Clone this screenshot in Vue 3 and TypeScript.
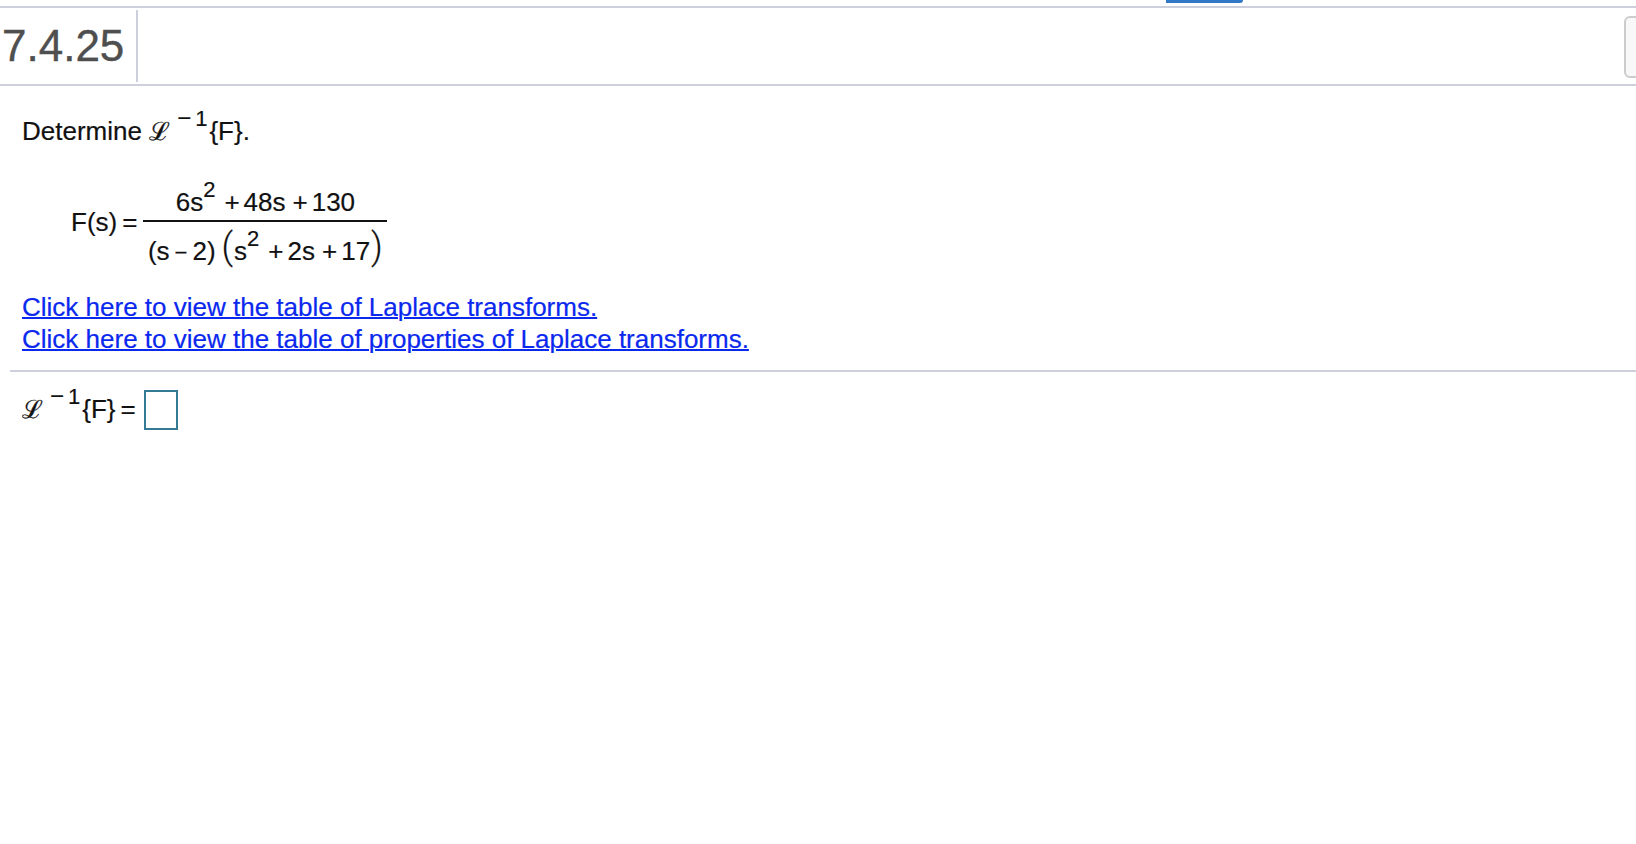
<script setup lang="ts">
const links: string[] = [
  'Click here to view the table of Laplace transforms.',
  'Click here to view the table of properties of Laplace transforms.',
]
</script>

<template>
  <div class="page">
    <div class="strip"><div class="tab"></div></div>
    <header class="head">
      <div class="num">7.4.25</div>
      <div class="tool"></div>
    </header>
    <main class="body">
      <p class="det">Determine <span class="script">ℒ</span><sup class="inv"><span class="minus">−</span><span class="one">1</span></sup>{F}.</p>
      <div class="eq">
        <span class="lhs">F(s)<span class="eqsign">=</span></span>
        <div class="frac">
          <div class="top">6s<sup class="sq">2</sup><span class="op">+</span>48s<span class="op">+</span>130</div>
          <div class="bot">(s<span class="sub">−</span>2)<span class="paren open">(</span>s<sup class="sq">2</sup><span class="op">+</span>2s<span class="op">+</span>17<span class="paren close">)</span></div>
        </div>
      </div>
      <div class="links">
        <a v-for="l in links" :key="l" class="link" href="#">{{ l }}</a>
      </div>
      <div class="answer">
        <span class="expr"><span class="script">ℒ</span><sup class="inv"><span class="minus">−</span><span class="one">1</span></sup>{F}<span class="eqsign">=</span></span>
        <span class="box"></span>
      </div>
    </main>
  </div>
</template>

<style scoped>
.page {
  width: 1636px;
  height: 844px;
  background: #fff;
  overflow: hidden;
  font-family: "Liberation Sans", Arial, sans-serif;
  color: #111;
  font-size: 26px;
  -webkit-text-stroke: 0.2px;
}
.strip { height: 6px; }
.tab {
  width: 77px;
  height: 3px;
  margin-left: 1166px;
  background: #3278c8;
  border-bottom-right-radius: 6px;
}
.head {
  height: 76px;
  border-top: 2px solid #cdcfdd;
  border-bottom: 2px solid #cdcfdd;
  display: flex;
  align-items: flex-start;
  justify-content: space-between;
}
.num {
  margin-top: 2px;
  height: 72px;
  width: 138px;
  box-sizing: border-box;
  border-right: 2px solid #cdcfdd;
  font-size: 44px;
  line-height: 72px;
  color: #4f4f4f;
  padding-left: 2px;
  -webkit-text-stroke: 0.4px;
}
.tool {
  width: 40px;
  height: 62px;
  margin-top: 8px;
  margin-right: -28px;
  box-sizing: border-box;
  border: 2px solid #cccccc;
  border-radius: 6px;
  background: #f8f8f8;
}
.body { padding-left: 10px; }
.det {
  margin: 29px 0 0;
  padding-left: 12px;
  line-height: 32px;
  white-space: nowrap;
}
.script {
  font-family: "DejaVu Serif", serif;
  font-size: 25px;
  color: #111;
  -webkit-text-stroke: 0.3px #111;
}
.inv {
  font-size: 22px;
  line-height: 0;
  vertical-align: 14px;
  margin-left: 7px;
  margin-right: 2px;
}
.minus { font-size: 24px; }
.one { margin-left: 4px; }
.eqsign { margin-left: 5px; }
.eq {
  display: flex;
  align-items: center;
  margin-top: 22px;
  padding-left: 61px;
  white-space: nowrap;
}
.lhs {
  margin-right: 6px;
  padding-top: 4px;
}
.frac {
  display: flex;
  flex-direction: column;
  width: 244px;
  text-align: center;
}
.top {
  height: 50px;
  line-height: 64px;
  border-bottom: 2px solid #111;
}
.bot {
  height: 48px;
  line-height: 58px;
}
.sq {
  font-size: 22px;
  line-height: 0;
  vertical-align: 14px;
  margin-right: 2px;
}
.op { margin: 0 4px 0 7px; }
.sub { font-size: 22px; margin: 0 5px; }
.paren {
  font-family: Roboto, "Liberation Sans", sans-serif;
  font-size: 36px;
  font-weight: 300;
  line-height: 0;
  vertical-align: 1px;
}
.open { margin-left: 6px; margin-right: 1px; }
.close { margin-left: 1px; }
.links {
  margin-top: 21px;
  padding-left: 12px;
  display: flex;
  flex-direction: column;
  align-items: flex-start;
  padding-bottom: 15px;
  border-bottom: 2px solid #cdcfdd;
}
.link {
  color: #0a28ee;
  text-decoration: underline;
  text-decoration-thickness: 2px;
  line-height: 32px;
}
.answer {
  display: flex;
  align-items: center;
  gap: 8px;
  padding-left: 12px;
  margin-top: 17px;
  height: 42px;
  white-space: nowrap;
}
.expr { padding-bottom: 4px; }
.box {
  display: block;
  width: 34px;
  height: 40px;
  box-sizing: border-box;
  border: 2px solid #357a94;
}
</style>
